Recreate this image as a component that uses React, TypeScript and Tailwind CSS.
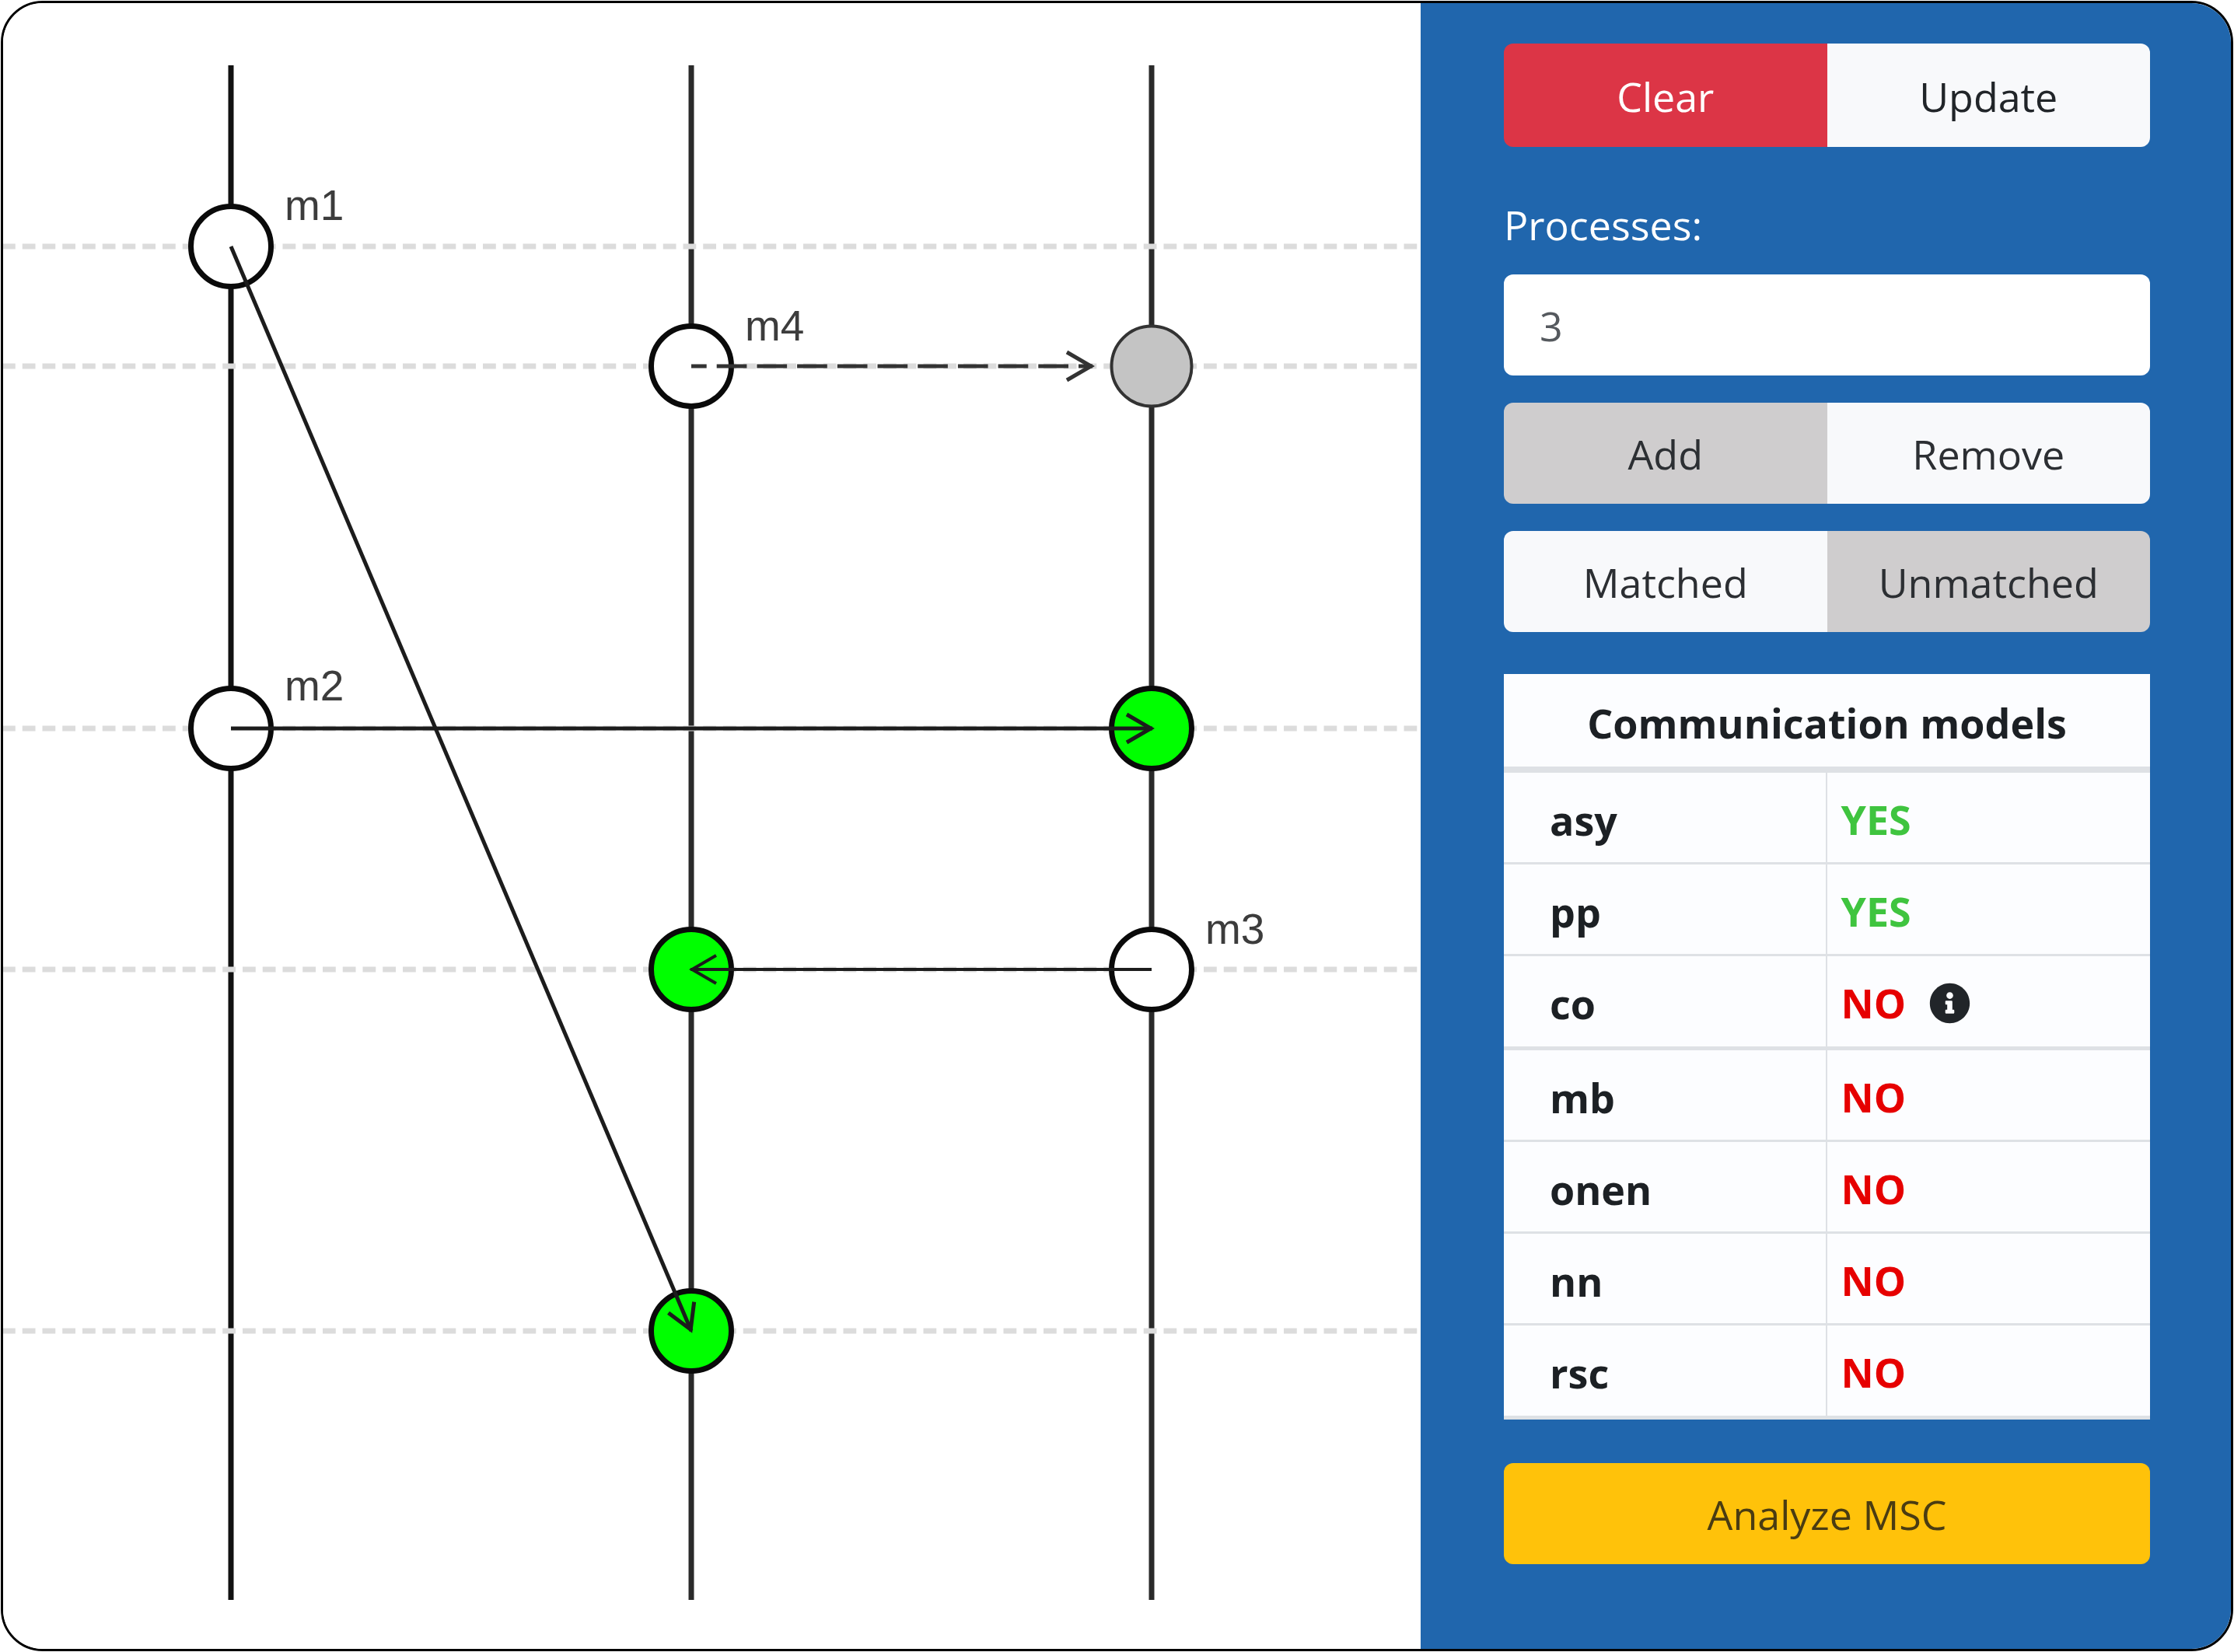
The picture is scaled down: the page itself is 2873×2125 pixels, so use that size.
import { useState } from "react";

type Point = { x: number; y: number };

const LIFELINES = [
  { x: 297, color: "#111111" },
  { x: 889, color: "#2a2a2a" },
  { x: 1481, color: "#2a2a2a" },
];
const ROWS = [317, 471, 937, 1247, 1712];

const NODES = [
  { x: 297, y: 317, fill: "#ffffff", stroke: "#0a0a0a", width: 7 },
  { x: 889, y: 471, fill: "#ffffff", stroke: "#0a0a0a", width: 7 },
  { x: 1481, y: 471, fill: "#c4c4c4", stroke: "#333333", width: 4 },
  { x: 297, y: 937, fill: "#ffffff", stroke: "#0a0a0a", width: 7 },
  { x: 1481, y: 937, fill: "#00ff00", stroke: "#0a0a0a", width: 7 },
  { x: 889, y: 1247, fill: "#00ff00", stroke: "#0a0a0a", width: 7 },
  { x: 1481, y: 1247, fill: "#ffffff", stroke: "#0a0a0a", width: 7 },
  { x: 889, y: 1712, fill: "#00ff00", stroke: "#0a0a0a", width: 7 },
];

const LABELS = [
  { x: 366, y: 283, text: "m1" },
  { x: 958, y: 438, text: "m4" },
  { x: 366, y: 901, text: "m2" },
  { x: 1550, y: 1214, text: "m3" },
];

const MODELS = [
  { name: "asy", ok: true },
  { name: "pp", ok: true },
  { name: "co", ok: false, info: true, thick: true },
  { name: "mb", ok: false },
  { name: "onen", ok: false },
  { name: "nn", ok: false },
  { name: "rsc", ok: false, thick: true },
];

function Arrow({ from, to, dashed, width = 5, color = "#1c1c1c" }: { from: Point; to: Point; dashed?: boolean; width?: number; color?: string }) {
  const angle = (Math.atan2(to.y - from.y, to.x - from.x) * 180) / Math.PI;
  return (
    <g fill="none" stroke={color} strokeWidth={width}>
      <line
        x1={from.x}
        y1={from.y}
        x2={to.x}
        y2={to.y}
        strokeDasharray={dashed ? "38.7 13" : undefined}
        strokeDashoffset={dashed ? 19 : undefined}
      />
      <path d="M-33 -18 L-2 0 L-33 18" transform={`translate(${to.x} ${to.y}) rotate(${angle})`} />
    </g>
  );
}

function Diagram() {
  return (
    <svg viewBox="4 4 1823 2117" className="block h-auto w-full" role="img" aria-label="Message sequence chart">
      {LIFELINES.map((l) => (
        <line key={l.x} x1={l.x} x2={l.x} y1={84} y2={2058} stroke={l.color} strokeWidth={7} />
      ))}
      {ROWS.map((y) => (
        <line key={y} x1={3} x2={1827} y1={y} y2={y} stroke="#dcdcdc" strokeWidth={7} strokeDasharray="16.75 9" />
      ))}
      {NODES.map((n) => (
        <circle key={`${n.x}-${n.y}`} cx={n.x} cy={n.y} r={51.5} fill={n.fill} stroke={n.stroke} strokeWidth={n.width} />
      ))}
      <Arrow from={{ x: 297, y: 317 }} to={{ x: 889, y: 1712 }} />
      <Arrow from={{ x: 297, y: 937 }} to={{ x: 1482, y: 937 }} />
      <Arrow from={{ x: 1481, y: 1247 }} to={{ x: 888, y: 1247 }} width={4} />
      <Arrow from={{ x: 889, y: 471 }} to={{ x: 1405, y: 471 }} dashed color="#333333" />
      {LABELS.map((l) => (
        <text key={l.text} x={l.x} y={l.y} fill="#3c3c3c" className="font-['Liberation_Sans',sans-serif] text-[55px]">
          {l.text}
        </text>
      ))}
    </svg>
  );
}

function InfoIcon() {
  return (
    <svg viewBox="0 0 512 512" className="size-[53px]" fill="#212529" aria-hidden="true">
      <path d="M256 8C119.043 8 8 119.083 8 256c0 136.997 111.043 248 248 248s248-111.003 248-248C504 119.083 392.957 8 256 8zm0 110c23.196 0 42 18.804 42 42s-18.804 42-42 42-42-18.804-42-42 18.804-42 42-42zm56 254c0 6.627-5.373 12-12 12h-88c-6.627 0-12-5.373-12-12v-24c0-6.627 5.373-12 12-12h12v-64h-12c-6.627 0-12-5.373-12-12v-24c0-6.627 5.373-12 12-12h64c6.627 0 12 5.373 12 12v100h12c6.627 0 12 5.373 12 12v24z" />
    </svg>
  );
}

function Toggle({ options, value, onChange }: { options: string[]; value: string; onChange: (v: string) => void }) {
  return (
    <div className="grid h-[130px] grid-cols-2 overflow-hidden rounded-xl">
      {options.map((o) => (
        <button
          key={o}
          type="button"
          aria-pressed={o === value}
          onClick={() => onChange(o)}
          className={o === value ? "bg-[#cfcdce] pt-0.5 text-[#2c2f33]" : "bg-[#f8f9fb] pt-0.5 text-[#2c2f33]"}
        >
          {o}
        </button>
      ))}
    </div>
  );
}

export default function App() {
  const [processes, setProcesses] = useState("3");
  const [mode, setMode] = useState("Add");
  const [match, setMatch] = useState("Unmatched");

  return (
    <div className="min-h-screen bg-white p-px font-['Open_Sans','Noto_Sans',sans-serif] text-[52px] leading-[78px]">
      <div className="grid min-h-[calc(100vh-2px)] grid-cols-[1823fr_1042fr] overflow-hidden rounded-[54px] border-3 border-black">
        <main className="bg-white">
          <Diagram />
        </main>
        <aside className="flex flex-col bg-[#2066ad] pt-[52px] pr-[104px] pb-[100px] pl-[107px]">
          <div className="grid h-[133px] grid-cols-2 overflow-hidden rounded-xl">
            <button type="button" className="bg-[#dc3546] pt-0.5 text-white">Clear</button>
            <button type="button" className="bg-[#f8f9fb] pt-0.5 text-[#212529]">Update</button>
          </div>
          <label htmlFor="processes" className="mt-[61px] text-white">Processes:</label>
          <input
            id="processes"
            value={processes}
            onChange={(e) => setProcesses(e.target.value)}
            className="mt-[25px] h-[130px] w-full rounded-xl bg-white px-[46px] text-[#55595e] outline-none"
          />
          <div className="mt-[35px] flex flex-col gap-[35px]">
            <Toggle options={["Add", "Remove"]} value={mode} onChange={setMode} />
            <Toggle options={["Matched", "Unmatched"]} value={match} onChange={setMatch} />
          </div>
          <table className="mt-[54px] w-full table-fixed border-separate border-spacing-0 bg-[#fcfdff] text-[#1c2024]">
            <thead>
              <tr className="h-[127px]">
                <th colSpan={2} scope="colgroup" className="border-b-8 border-[#dee1e5] px-0 pt-1.5 pb-0 text-center font-bold">
                  Communication models
                </th>
              </tr>
            </thead>
            <tbody>
              {MODELS.map((m) => (
                <tr key={m.name} className={m.thick ? "h-[121px]" : "h-[118px]"}>
                  <th
                    scope="row"
                    className={`border-r-2 border-[#dee1e5] pt-1.5 pr-0 pb-0 pl-[59px] text-left font-bold ${m.thick ? "border-b-5" : "border-b-3"}`}
                  >
                    {m.name}
                  </th>
                  <td className={`border-[#dee1e5] pt-1 pr-0 pb-0 pl-[18px] font-bold ${m.thick ? "border-b-5" : "border-b-3"}`}>
                    <span className="flex items-center gap-[30px]">
                      <span className={m.ok ? "text-[#3fc43f]" : "text-[#e60000]"}>{m.ok ? "YES" : "NO"}</span>
                      {m.info && (
                        <button type="button" aria-label="More information">
                          <InfoIcon />
                        </button>
                      )}
                    </span>
                  </td>
                </tr>
              ))}
            </tbody>
          </table>
          <button type="button" className="mt-[56px] h-[130px] rounded-xl bg-[#ffc20a] pt-0.5 text-[#4a3c12]">
            Analyze MSC
          </button>
        </aside>
      </div>
    </div>
  );
}
